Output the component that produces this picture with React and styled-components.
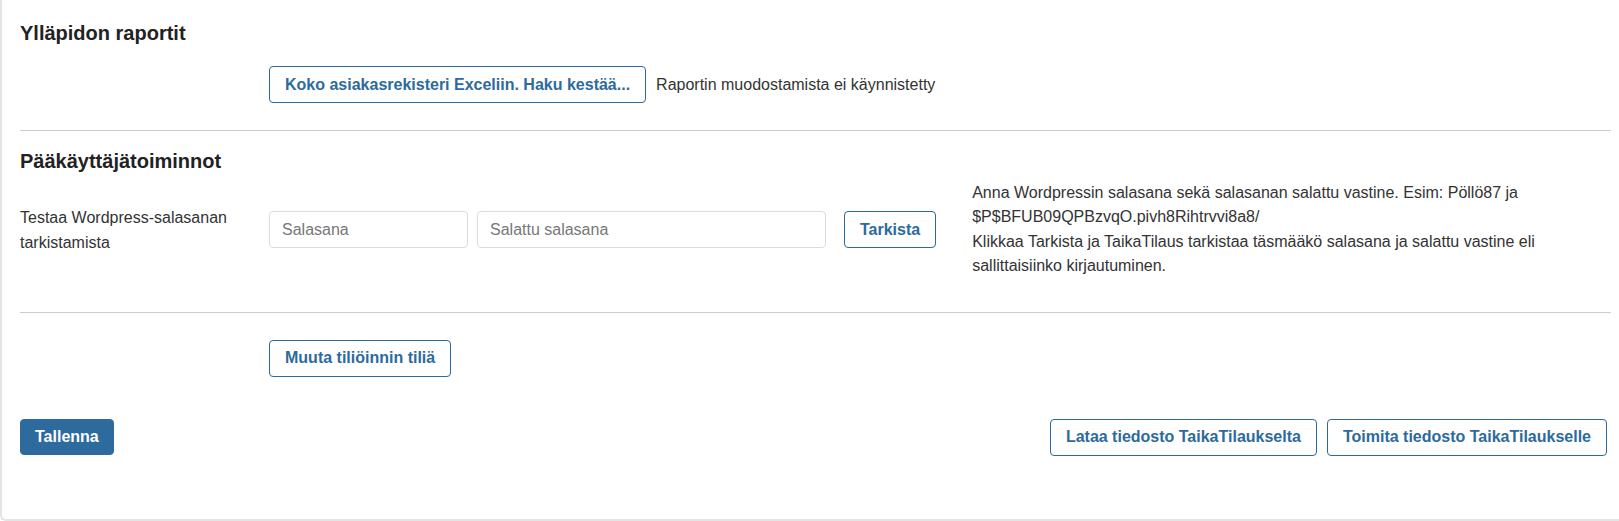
import React from "react";
import styled, { createGlobalStyle } from "styled-components";

const GlobalStyle = createGlobalStyle`
  body {
    margin: 0;
    background: #ffffff;
    font-family: "Liberation Sans", Arial, sans-serif;
    font-size: 16px;
    color: #333333;
  }
`;

const App = () => {
  return (
    <>
      <GlobalStyle />
      <Panel>
        <SectionTitle>Ylläpidon raportit</SectionTitle>
        <FormRow $top={22}>
          <RowLabel />
          <Controls>
            <OutlineButton>Koko asiakasrekisteri Exceliin. Haku kestää...</OutlineButton>
            <StatusText>Raportin muodostamista ei käynnistetty</StatusText>
          </Controls>
        </FormRow>

        <Divider $top={27} />

        <SectionTitle $top={19}>Pääkäyttäjätoiminnot</SectionTitle>
        <FormRow $top={9}>
          <RowLabel>Testaa Wordpress-salasanan tarkistamista</RowLabel>
          <Controls>
            <TextInput placeholder="Salasana" $width={199} />
            <TextInput placeholder="Salattu salasana" $width={349} />
            <OutlineButton $left={9}>Tarkista</OutlineButton>
            <HelpText>
              Anna Wordpressin salasana sekä salasanan salattu vastine. Esim: Pöllö87 ja
              $P$BFUB09QPBzvqO.pivh8Rihtrvvi8a8/
              <br />
              Klikkaa Tarkista ja TaikaTilaus tarkistaa täsmääkö salasana ja salattu vastine eli
              sallittaisiinko kirjautuminen.
            </HelpText>
          </Controls>
        </FormRow>

        <Divider $top={33} />

        <FormRow $top={27}>
          <RowLabel />
          <Controls>
            <OutlineButton>Muuta tiliöinnin tiliä</OutlineButton>
          </Controls>
        </FormRow>

        <Footer>
          <PrimaryButton>Tallenna</PrimaryButton>
          <ButtonGroup>
            <OutlineButton>Lataa tiedosto TaikaTilaukselta</OutlineButton>
            <OutlineButton>Toimita tiedosto TaikaTilaukselle</OutlineButton>
          </ButtonGroup>
        </Footer>
      </Panel>
    </>
  );
};

export default App;

const Panel = styled.div`
  box-sizing: border-box;
  width: 1619px;
  height: 521px;
  padding: 22px 8px 0 18px;
  border-left: 2px solid #e4e4e4;
  border-bottom: 2px solid #e4e4e4;
  border-bottom-left-radius: 6px;
  background: #ffffff;
`;

const SectionTitle = styled.h3`
  margin: ${(p) => p.$top || 0}px 0 0 0;
  font-size: 20px;
  line-height: 22px;
  font-weight: bold;
  color: #222222;
`;

const FormRow = styled.div`
  display: grid;
  grid-template-columns: 249px 1fr;
  align-items: center;
  margin-top: ${(p) => p.$top || 0}px;
`;

const RowLabel = styled.div`
  padding-right: 16px;
  line-height: 25px;
  color: #333333;
`;

const Controls = styled.div`
  display: flex;
  align-items: center;
  gap: 9px;
`;

const OutlineButton = styled.button`
  box-sizing: border-box;
  height: 37px;
  padding: 0 15px;
  margin-left: ${(p) => p.$left || 0}px;
  background: #ffffff;
  border: 1px solid #2d6a9e;
  border-radius: 4px;
  color: #2d6a9e;
  font-family: "Liberation Sans", Arial, sans-serif;
  font-size: 16px;
  font-weight: bold;
  white-space: nowrap;
  cursor: pointer;
`;

const PrimaryButton = styled(OutlineButton)`
  height: 36px;
  padding: 0 14px;
  background: #2d6a9e;
  color: #ffffff;
`;

const StatusText = styled.span`
  margin-left: 1px;
  color: #333333;
`;

const TextInput = styled.input`
  box-sizing: border-box;
  width: ${(p) => p.$width}px;
  height: 37px;
  padding: 0 12px;
  border: 1px solid #dcdcdc;
  border-radius: 4px;
  font-family: "Liberation Sans", Arial, sans-serif;
  font-size: 16px;
  color: #333333;

  &::placeholder {
    color: #777777;
  }
`;

const HelpText = styled.div`
  flex: 1;
  margin-left: 27px;
  line-height: 24.4px;
  color: #333333;
`;

const Divider = styled.hr`
  margin: ${(p) => p.$top || 0}px 0 0 0;
  border: none;
  border-top: 1px solid #cccccc;
`;

const Footer = styled.div`
  display: flex;
  justify-content: space-between;
  align-items: center;
  margin-top: 42px;
  padding-right: 4px;
`;

const ButtonGroup = styled.div`
  display: flex;
  gap: 10px;
`;
